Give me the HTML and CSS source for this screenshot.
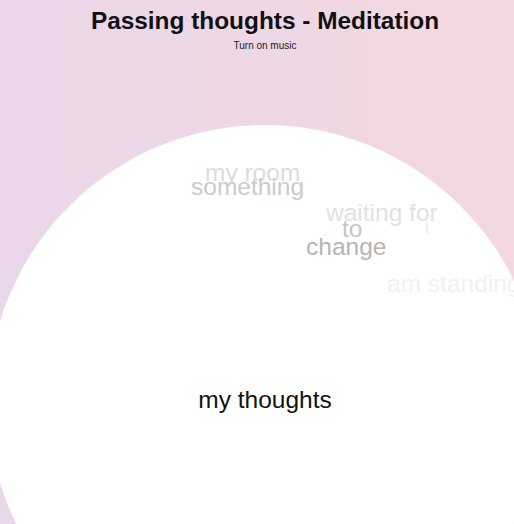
FILE: index.html
```html
<!DOCTYPE html>
<html lang="en">
<head>
  <meta charset="UTF-8">
  <title>Passing thoughts - Meditation</title>
  <link rel="stylesheet" href="styles.css">
</head>
<body>
  <div class="page">
    <h1>Passing thoughts - Meditation</h1>
    <a class="music" href="#">Turn on music</a>

    <div class="stage">
      <div class="circle">
        <span class="thought t-and">and my thoughts are</span>
        <span class="thought t-room">my room</span>
        <span class="thought t-something">something</span>
        <span class="thought t-waiting">waiting for</span>
        <span class="thought t-to">to</span>
        <span class="thought t-change">change</span>
        <span class="thought t-i">I</span>
        <span class="thought t-standing">am standing</span>
        <div class="current">my thoughts</div>
      </div>
    </div>
  </div>
</body>
</html>
```

FILE: styles.css
```css
html, body { margin: 0; height: 100%; overflow: hidden; }
body { font-family: "Liberation Sans", Arial, sans-serif; background: linear-gradient(to right, #e9d7ea, #f3d8df); color: #111; }
.page { width: 530px; text-align: center; }
h1 { font-size: 24.4px; font-weight: bold; margin: 7px 0 0; line-height: normal; }
.music { display: block; font-size: 10px; color: #222; text-decoration: none; margin-top: 5px; line-height: normal; }
.stage { display: flex; justify-content: center; margin-top: 74px; }
.circle { position: relative; flex: none; width: 554px; height: 554px; border-radius: 50%; background: #fff; display: flex; align-items: center; justify-content: center; padding-bottom: 4px; box-sizing: border-box; }
.current { font-size: 24.5px; color: #111; }
.thought { position: absolute; font-size: 24.5px; line-height: normal; white-space: nowrap; }
.t-and { left: 206px; top: 18px; color: rgba(0, 0, 0, 0.025); }
.t-room { left: 217px; top: 34px; color: #dcdcdc; }
.t-something { left: 203px; top: 48px; color: #cbcbcb; }
.t-waiting { left: 338px; top: 74px; color: #e2e2e2; }
.t-to { left: 354px; top: 90px; color: #c6c6c6; }
.t-change { left: 318px; top: 108px; color: #b5b5b5; }
.t-i { left: 437px; top: 95px; font-size: 16px; color: #eeeeee; }
.t-standing { left: 399px; top: 145px; color: #f1f1f1; }
```
